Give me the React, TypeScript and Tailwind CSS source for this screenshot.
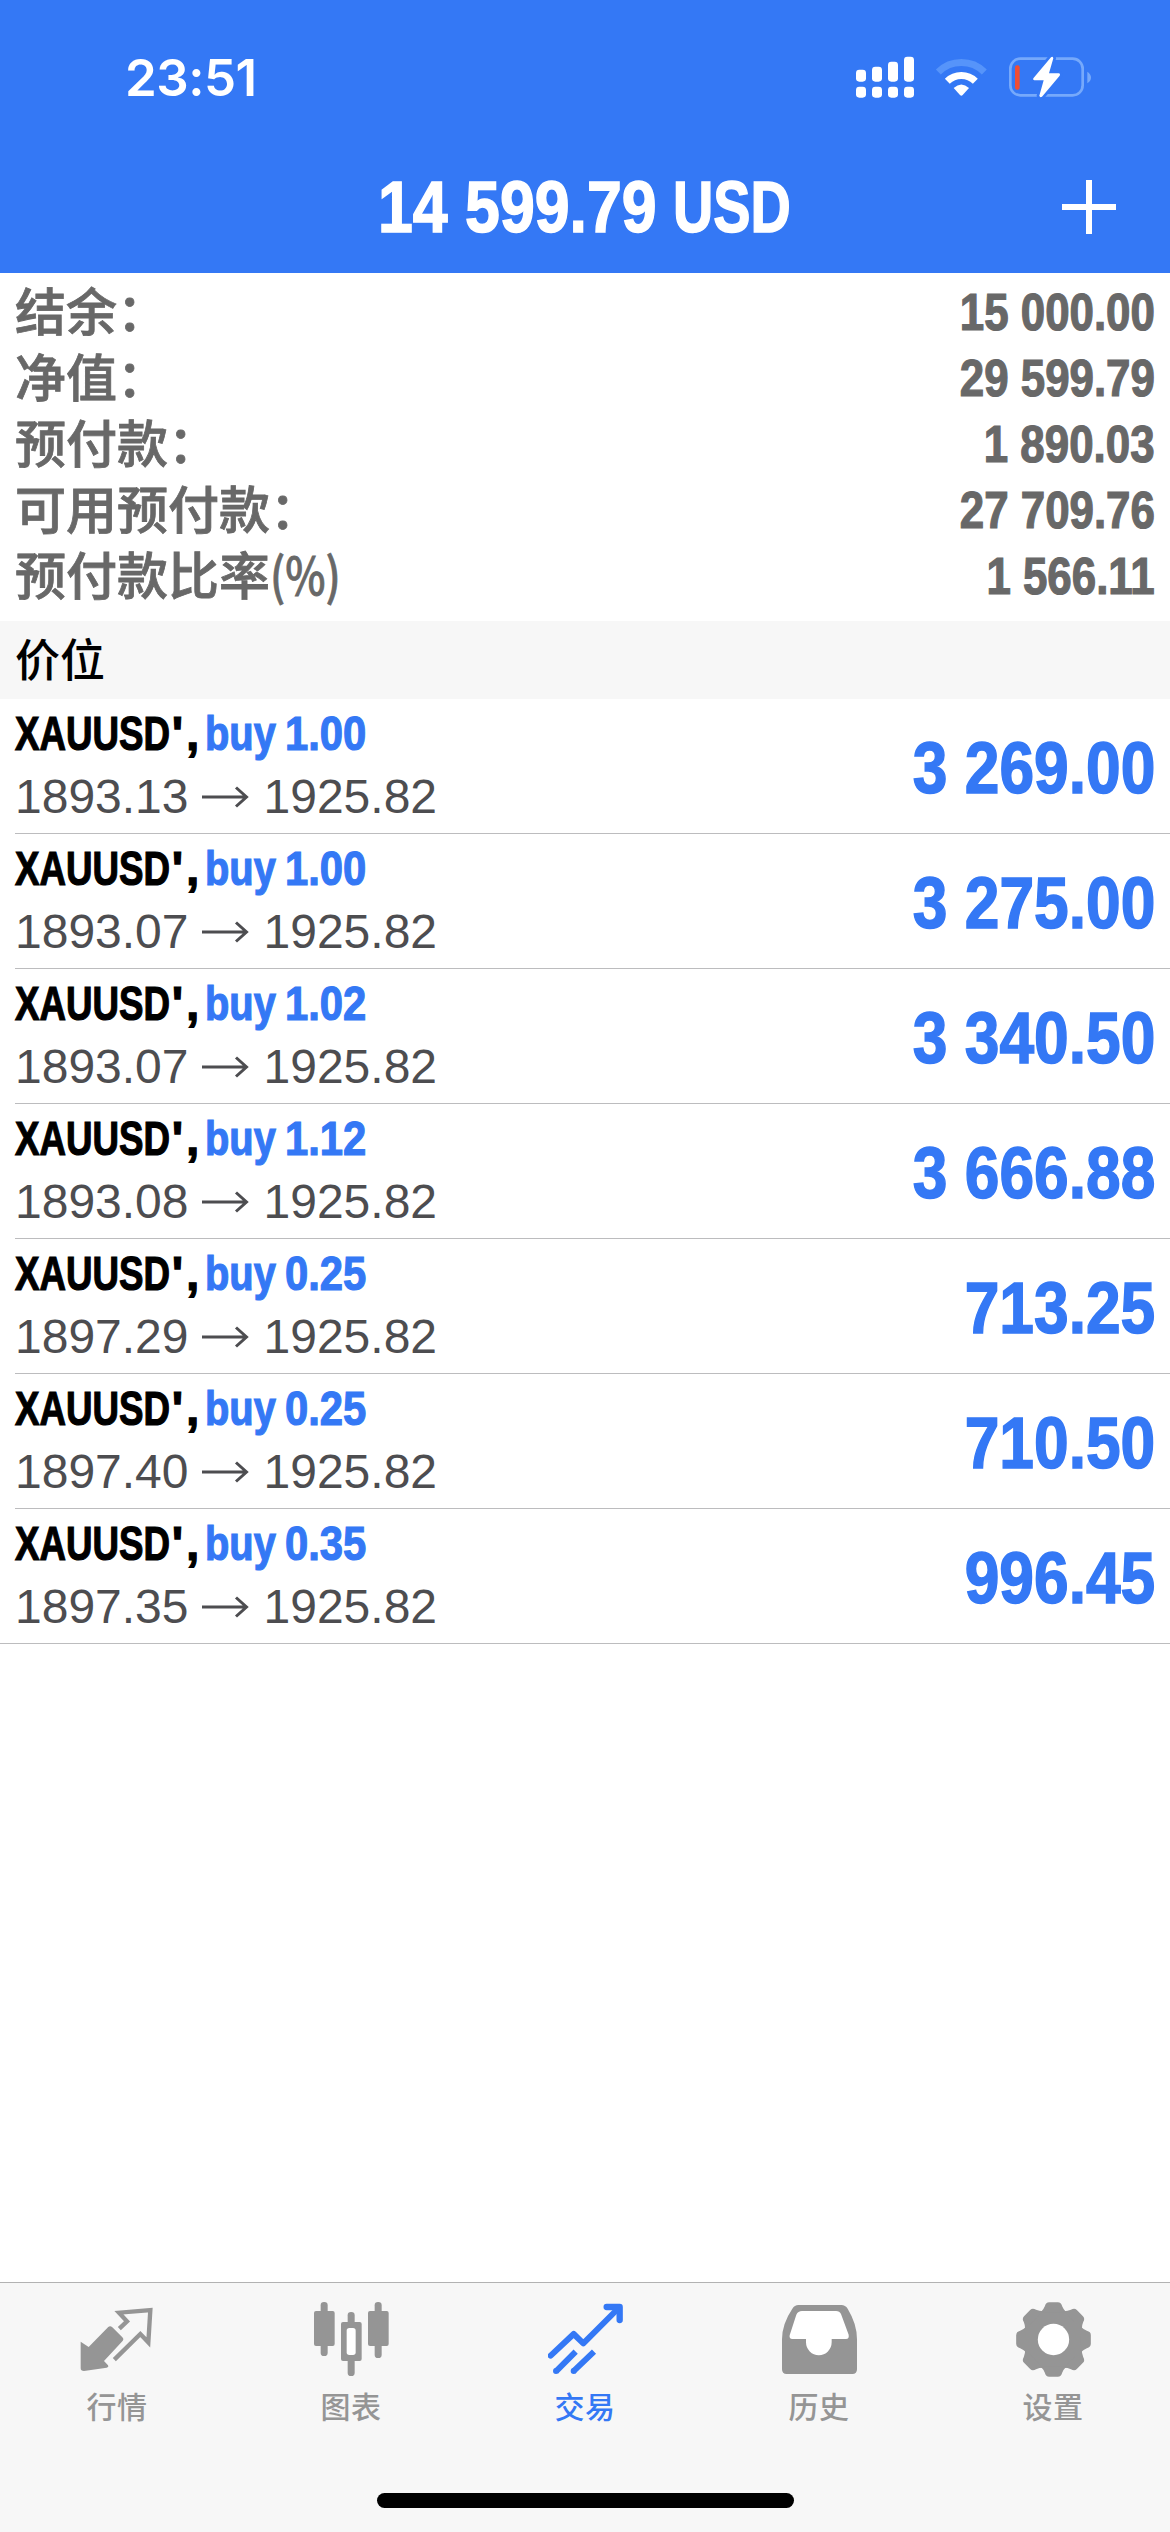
import React from 'react'

const account = [
  { label: '结余：', value: '15 000.00' },
  { label: '净值：', value: '29 599.79' },
  { label: '预付款：', value: '1 890.03' },
  { label: '可用预付款：', value: '27 709.76' },
  { label: '预付款比率', unit: '(%)', value: '1 566.11' },
]

const positions = [
  { volume: '1.00', open: '1893.13', profit: '3 269.00' },
  { volume: '1.00', open: '1893.07', profit: '3 275.00' },
  { volume: '1.02', open: '1893.07', profit: '3 340.50' },
  { volume: '1.12', open: '1893.08', profit: '3 666.88' },
  { volume: '0.25', open: '1897.29', profit: '713.25' },
  { volume: '0.25', open: '1897.40', profit: '710.50' },
  { volume: '0.35', open: '1897.35', profit: '996.45' },
]

function StatusIcons() {
  return (
    <svg width="240" height="48" viewBox="75 40 720 144">
      {/* Signal */}
      <g fill="#fff">
        <rect x="78" y="90" width="30" height="36" rx="10" />
        <rect x="126" y="81" width="30" height="45" rx="10" />
        <rect x="174" y="66" width="30" height="60" rx="10" />
        <rect x="222" y="51" width="30" height="75" rx="10" />
        <rect x="78" y="141" width="30" height="33" rx="10" />
        <rect x="126" y="141" width="30" height="33" rx="10" />
        <rect x="174" y="141" width="30" height="33" rx="10" />
        <rect x="222" y="141" width="30" height="33" rx="10" />
      </g>
      {/* Wifi */}
      <path d="M325 97 A98 98 0 0 1 463 97" fill="none" stroke="#5694fa" strokeWidth="21" />
      <path d="M352 125 A60 60 0 0 1 436 125" fill="none" stroke="#fff" strokeWidth="21" />
      <path d="M371 145 Q394 124 417 145 L398 166 Q394 170 390 166 Z" fill="#fff" />
      {/* Battery */}
      <rect x="541" y="57" width="217" height="110" rx="30" fill="none" stroke="#76a9fb" strokeWidth="8" />
      <path d="M772 96 Q783 103 783 113.500 Q783 124 772 131 Z" fill="#76a9fb" />
      <rect x="555" y="77" width="14" height="73" rx="6" fill="#f24d33" />
      <path
        d="M663 53 L610 116 Q607 121 613 122 H641 L628 168 Q630 175 636 171 L689 108 Q692 102 686 101 H657 L670 56 Q668 49 663 53 Z"
        fill="#fff"
        stroke="#3478f5"
        strokeWidth="16"
        paintOrder="stroke"
      />
    </svg>
  )
}

function QuotesIcon() {
  return (
    <svg width="75" height="75" viewBox="0 0 225 225">
      <path
        d="M2 119 L26 135 L84 76 Q90 69 97 76 L127 106 Q133 112 127 118 L72 177 L84 190 Q87 196 80 197 L12 207 Q2 207 2 199 Z"
        fill="#959595"
      />
      <path
        d="M118 80 L141 58 L117 32 L211 24 L205 121 L181 96 L103 173"
        fill="none"
        stroke="#959595"
        strokeWidth="13"
      />
    </svg>
  )
}

function ChartIcon() {
  return (
    <svg width="75" height="75" viewBox="0 0 225 225" fill="#959595">
      <rect x="20" y="0" width="21" height="162" rx="10" />
      <rect x="0" y="27" width="62" height="105" rx="6" />
      <rect x="101" y="30" width="21" height="192" rx="10" />
      <rect x="81" y="60" width="62" height="117" rx="6" />
      <rect x="98" y="78" width="27" height="81" rx="8" fill="#fff" />
      <rect x="182" y="0" width="21" height="168" rx="10" />
      <rect x="162" y="27" width="62" height="105" rx="6" />
    </svg>
  )
}

function TradeIcon() {
  return (
    <svg width="75" height="75" viewBox="0 0 225 225" fill="none" stroke="#3478f5" strokeWidth="18">
      <path d="M8 161 L77 96 L106 124 L212 18" strokeLinecap="round" strokeLinejoin="round" />
      <path d="M176 15 H215 V54" strokeWidth="19" strokeLinecap="round" strokeLinejoin="round" />
      <path d="M24 208 L83 149 M76 208 L138 149" />
      <path d="M24 207 h.1 M77 207 h.1" strokeLinecap="round" />
    </svg>
  )
}

function HistoryIcon() {
  return (
    <svg width="75" height="75" viewBox="0 0 225 225">
      <path
        d="M49 9 H178 Q190 9 197 20 Q225 66 225 112 V202 Q225 216 211 216 H14 Q0 216 0 202 V112 Q0 66 31 20 Q38 9 49 9 Z"
        fill="#959595"
      />
      <path
        d="M60 27 H162 Q173 27 177 36 L200 98 Q202 111 192 111 H149 V121 A38 38 0 0 1 72 121 V111 H31 Q21 111 23 100 L43 38 Q48 27 60 27 Z"
        fill="#fff"
      />
    </svg>
  )
}

function SettingsIcon() {
  return (
    <svg width="75" height="75" viewBox="-112.500 -112.500 225 225" fill="#959595">
      <circle r="92" />
      {[0, 45, 90, 135, 180, 225, 270, 315].map((angle) => (
        <path
          key={angle}
          transform={`rotate(${angle})`}
          d="M-38 -82 Q-30 -90 -26 -100 Q-23 -112 -13 -112 H13 Q23 -112 26 -100 Q30 -90 38 -82 Z"
        />
      ))}
      <circle r="47" fill="#fff" />
    </svg>
  )
}

const tabs = [
  { label: '行情', icon: <QuotesIcon /> },
  { label: '图表', icon: <ChartIcon /> },
  { label: '交易', icon: <TradeIcon />, active: true },
  { label: '历史', icon: <HistoryIcon /> },
  { label: '设置', icon: <SettingsIcon /> },
]

export default function App() {
  return (
    <div className="w-[1170px] h-[2532px] flex flex-col bg-white overflow-hidden whitespace-nowrap font-['Liberation_Sans','Noto_Sans_CJK_SC',sans-serif]">

      {/* Header */}
      <header className="h-[273px] shrink-0 bg-[#3478f5] text-white">
        <div className="h-[141px] flex justify-between pl-[125px] pr-[75px]">
          <span className="text-[51px] leading-[155px] font-semibold tracking-[-0.5px] font-['Inter',sans-serif]">23:51</span>
          <div className="pt-[53px]">
            <StatusIcons />
          </div>
        </div>
        <div className="h-[132px] flex items-center pl-[378px] pr-[54px] text-[72px] leading-none font-bold">
          <span className="w-[295px]">
            <span className="inline-block origin-left scale-x-[0.87] [-webkit-text-stroke:1.5px]">14 599.79</span>
          </span>
          <span className="w-[120px]">
            <span className="inline-block origin-left scale-x-[0.775] [-webkit-text-stroke:1.5px]">USD</span>
          </span>
          <svg className="ml-auto" width="54" height="54" viewBox="0 0 54 54" stroke="#fff" strokeWidth="6">
            <path d="M27 0 V54 M0 27 H54" />
          </svg>
        </div>
      </header>

      {/* Account */}
      <section className="h-[348px] shrink-0 pt-[3px] px-[15px] text-[#686868]">
        {account.map((item) => (
          <div key={item.label} className="h-[66px] flex items-start justify-between">
            <span className="text-[51px] leading-[67px] font-medium [-webkit-text-stroke:0.8px] font-['Noto_Sans_CJK_SC',sans-serif]">
              {item.label}
              {item.unit && <span className="inline-block origin-left scale-x-[0.84]">{item.unit}</span>}
            </span>
            <span className="inline-block origin-right scale-x-[0.86] text-[51px] leading-[73px] font-bold [-webkit-text-stroke:1.2px]">
              {item.value}
            </span>
          </div>
        ))}
      </section>

      <h2 className="h-[78px] shrink-0 px-[15px] bg-[#f7f7f7] text-black text-[45px] leading-[74px] font-medium font-['Noto_Sans_CJK_SC',sans-serif]">
        价位
      </h2>

      {/* Positions */}
      <ul className="border-b border-[#bcbcbe]">
        {positions.map((item, index) => (
          <li
            key={index}
            className="h-[135px] ml-[15px] pr-[15px] flex justify-between border-b border-[#bcbcbe] last:h-[134px] last:border-b-0"
          >
            <div className="pt-[3px] text-[48px]">
              <div className="flex leading-[64px] font-bold [-webkit-text-stroke:1.2px]">
                <span className="w-[190px] text-black">
                  <span className="inline-block origin-left scale-x-[0.765]">XAUUSD</span>
                  <span className="inline-block origin-left -ml-[46px] tracking-[3px]">',</span>
                </span>
                <span className="w-[80px] text-[#3478f5]">
                  <span className="inline-block origin-left scale-x-[0.83]">buy</span>
                </span>
                <span className="text-[#3478f5]">
                  <span className="inline-block origin-left scale-x-[0.87]">{item.volume}</span>
                </span>
              </div>
              <div className="flex items-center gap-[13px] leading-[61px] text-[#4d4d50]">
                <span>{item.open}</span>
                <svg width="49" height="24" viewBox="0 0 49 24" fill="none" stroke="currentColor" strokeWidth="3">
                  <path d="M0 12 H45 M34 2.500 L44.500 12 L34 21.500" />
                </svg>
                <span>1925.82</span>
              </div>
            </div>
            <div className="pt-[4px] flex items-center">
              <span className="inline-block origin-right scale-x-[0.865] text-[72px] leading-none font-bold text-[#3478f5] [-webkit-text-stroke:1.5px]">
                {item.profit}
              </span>
            </div>
          </li>
        ))}
      </ul>

      {/* Tab bar */}
      <footer className="mt-auto h-[250px] shrink-0 bg-[#f7f7f7] border-t border-[#b2b2b2]">
        <nav className="grid grid-cols-5 pt-[19px]">
          {tabs.map((tab) => (
            <div key={tab.label} className="flex flex-col items-center">
              {tab.icon}
              <span
                className={`mt-2 text-[30px] leading-[41px] tracking-[0.5px] font-medium font-['Noto_Sans_CJK_SC',sans-serif] ${tab.active ? 'text-[#3478f5]' : 'text-[#959595]'}`}
              >
                {tab.label}
              </span>
            </div>
          ))}
        </nav>
        <div className="mx-auto mt-[67px] w-[417px] h-[15px] rounded-full bg-black" />
      </footer>
    </div>
  )
}
